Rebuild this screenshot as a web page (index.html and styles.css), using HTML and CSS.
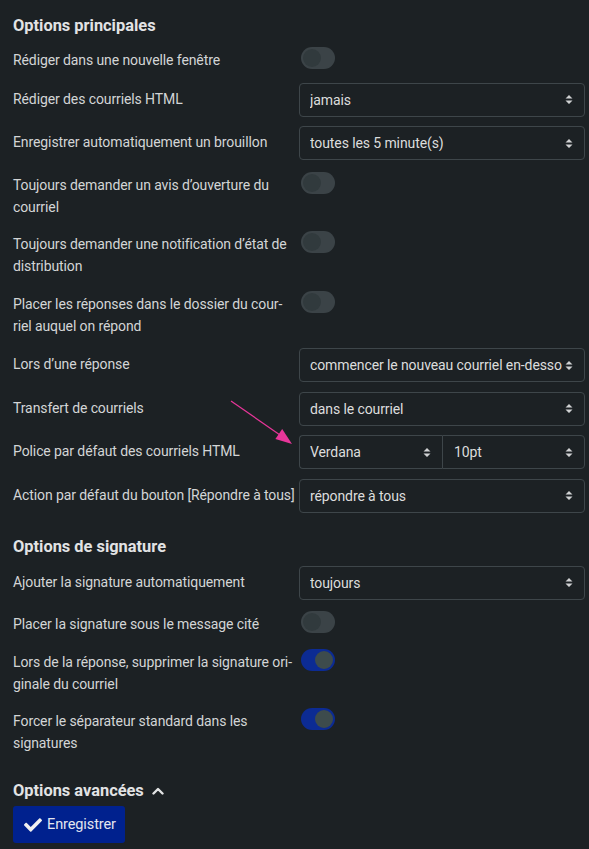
FILE: index.html
```html
<!DOCTYPE html>
<html lang="fr">
<head>
<meta charset="utf-8">
<title>Options</title>
<link rel="stylesheet" href="styles.css">
</head>
<body>
<div class="page">
  <h2 class="heading">Options principales</h2>

  <div class="row row-toggle">
    <div class="label">Rédiger dans une nouvelle fenêtre</div>
    <div class="control"><span class="toggle"></span></div>
  </div>
  <div class="row row-select">
    <div class="label">Rédiger des courriels HTML</div>
    <div class="control"><div class="select"><span class="val">jamais</span><svg class="caret" viewBox="0 0 8 11"><path d="M0.5 4.5 L4 1 L7.5 4.5 Z M0.5 6.5 L4 10 L7.5 6.5 Z"/></svg></div></div>
  </div>
  <div class="row row-select">
    <div class="label">Enregistrer automatiquement un brouillon</div>
    <div class="control"><div class="select"><span class="val">toutes les 5 minute(s)</span><svg class="caret" viewBox="0 0 8 11"><path d="M0.5 4.5 L4 1 L7.5 4.5 Z M0.5 6.5 L4 10 L7.5 6.5 Z"/></svg></div></div>
  </div>
  <div class="row row-toggle">
    <div class="label">Toujours demander un avis d’ouverture du courriel</div>
    <div class="control"><span class="toggle"></span></div>
  </div>
  <div class="row row-toggle">
    <div class="label">Toujours demander une notification d’état de distribution</div>
    <div class="control"><span class="toggle"></span></div>
  </div>
  <div class="row row-toggle">
    <div class="label">Placer les réponses dans le dossier du cour&shy;riel auquel on répond</div>
    <div class="control"><span class="toggle"></span></div>
  </div>
  <div class="row row-select">
    <div class="label">Lors d’une réponse</div>
    <div class="control"><div class="select"><span class="val">commencer le nouveau courriel en-dessous de la citation</span><svg class="caret" viewBox="0 0 8 11"><path d="M0.5 4.5 L4 1 L7.5 4.5 Z M0.5 6.5 L4 10 L7.5 6.5 Z"/></svg></div></div>
  </div>
  <div class="row row-select">
    <div class="label">Transfert de courriels</div>
    <div class="control"><div class="select"><span class="val">dans le courriel</span><svg class="caret" viewBox="0 0 8 11"><path d="M0.5 4.5 L4 1 L7.5 4.5 Z M0.5 6.5 L4 10 L7.5 6.5 Z"/></svg></div></div>
  </div>
  <div class="row row-select">
    <div class="label">Police par défaut des courriels HTML</div>
    <div class="control">
      <div class="select-group">
        <div class="select select-left"><span class="val">Verdana</span><svg class="caret" viewBox="0 0 8 11"><path d="M0.5 4.5 L4 1 L7.5 4.5 Z M0.5 6.5 L4 10 L7.5 6.5 Z"/></svg></div>
        <div class="select select-right"><span class="val">10pt</span><svg class="caret" viewBox="0 0 8 11"><path d="M0.5 4.5 L4 1 L7.5 4.5 Z M0.5 6.5 L4 10 L7.5 6.5 Z"/></svg></div>
      </div>
    </div>
    <svg class="arrow" viewBox="0 0 70 50"><line x1="1" y1="1" x2="50" y2="35" /><polygon points="62,44 45.4,39 52.2,29" /></svg>
  </div>
  <div class="row row-select">
    <div class="label nowrap">Action par défaut du bouton [Répondre à tous]</div>
    <div class="control"><div class="select"><span class="val">répondre à tous</span><svg class="caret" viewBox="0 0 8 11"><path d="M0.5 4.5 L4 1 L7.5 4.5 Z M0.5 6.5 L4 10 L7.5 6.5 Z"/></svg></div></div>
  </div>

  <h2 class="heading heading-section">Options de signature</h2>

  <div class="row row-select">
    <div class="label">Ajouter la signature automatiquement</div>
    <div class="control"><div class="select"><span class="val">toujours</span><svg class="caret" viewBox="0 0 8 11"><path d="M0.5 4.5 L4 1 L7.5 4.5 Z M0.5 6.5 L4 10 L7.5 6.5 Z"/></svg></div></div>
  </div>
  <div class="row row-toggle">
    <div class="label">Placer la signature sous le message cité</div>
    <div class="control"><span class="toggle"></span></div>
  </div>
  <div class="row row-toggle">
    <div class="label">Lors de la réponse, supprimer la signature ori&shy;ginale du courriel</div>
    <div class="control"><span class="toggle on"></span></div>
  </div>
  <div class="row row-toggle">
    <div class="label">Forcer le séparateur standard dans les signatures</div>
    <div class="control"><span class="toggle on"></span></div>
  </div>

  <h2 class="heading heading-section heading-adv">Options avancées <svg class="chev" viewBox="0 0 12 8"><path d="M1.5 6.5 L6 2 L10.5 6.5"/></svg></h2>

  <button class="btn"><svg class="check" viewBox="0 0 512 512"><path d="M173.898 439.404l-166.4-166.4c-9.997-9.997-9.997-26.206 0-36.204l36.203-36.204c9.997-9.998 26.207-9.998 36.204 0L192 312.69 432.095 72.596c9.997-9.997 26.207-9.997 36.204 0l36.203 36.204c9.997 9.997 9.997 26.206 0 36.204l-294.4 294.401c-9.998 9.997-26.207 9.997-36.204-.001z"/></svg>Enregistrer</button>
</div>
</body>
</html>
```

FILE: styles.css
```css
html, body {
  margin: 0;
  padding: 0;
  background: #1c2124;
}
body {
  font-family: Roboto, "Liberation Sans", Arial, sans-serif;
  color: #d3d5d6;
  font-size: 14px;
  letter-spacing: -0.1px;
}
.page {
  padding: 15px 4px 10px 13px;
  width: 589px;
  box-sizing: border-box;
}
.heading {
  margin: 0 0 8px 0;
  font-size: 16.4px;
  line-height: 22px;
  font-weight: 700;
  letter-spacing: 0;
  color: #e2e3e4;
  display: flex;
  align-items: center;
}
.heading-section {
  margin-top: 23px;
}
.heading-adv {
  margin-top: 24px;
  margin-bottom: 4px;
}
.chev {
  width: 12px;
  height: 8px;
  margin-left: 8px;
  fill: none;
  stroke: #e2e3e4;
  stroke-width: 2.4;
  stroke-linecap: round;
  stroke-linejoin: round;
}
.row {
  display: grid;
  grid-template-columns: 282px 286px;
  column-gap: 4px;
  align-items: start;
  margin-bottom: 9.5px;
  position: relative;
}
.label {
  line-height: 22px;
  hyphens: manual;
}
.nowrap {
  white-space: nowrap;
}
.row-select .label {
  padding-top: 5px;
}
.row-toggle {
  padding: 2px 0 2px;
}
.row-toggle .label {
  padding-top: 2px;
}
.control {
  display: flex;
}
.toggle {
  display: block;
  width: 34px;
  height: 22px;
  border-radius: 11px;
  background: #3b4347;
  margin-left: 2px;
  position: relative;
}
.toggle::after {
  content: "";
  position: absolute;
  top: 2px;
  left: 2px;
  width: 18px;
  height: 18px;
  border-radius: 50%;
  background: #313a3d;
}
.toggle.on {
  background: #0c2b93;
}
.toggle.on::after {
  left: 14px;
  background: #3d4b4c;
}
.select {
  flex: 1;
  height: 34px;
  box-sizing: border-box;
  border: 1px solid #3e464a;
  border-radius: 4px;
  display: flex;
  align-items: center;
  padding: 0 11px 0 10px;
  color: #dcdddd;
  font-size: 14px;
  min-width: 0;
}
.val {
  flex: 1;
  white-space: nowrap;
  overflow: hidden;
  min-width: 0;
  margin-right: 3px;
}
.caret {
  width: 8px;
  height: 11px;
  fill: #d0d2d3;
  flex: none;
}
.select-group {
  flex: 1;
  display: flex;
}
.select-left {
  flex: 0 0 143px;
  border-radius: 4px 0 0 4px;
  border-right-width: 0;
}
.select-right {
  border-radius: 0 4px 4px 0;
}
.select-right .val {
  padding-left: 1px;
}
.arrow {
  position: absolute;
  left: 217px;
  top: -35px;
  width: 70px;
  height: 50px;
  overflow: visible;
}
.arrow line {
  stroke: #e8369a;
  stroke-width: 1.2;
}
.arrow polygon {
  fill: #e8369a;
}
.btn {
  display: inline-flex;
  align-items: center;
  height: 37px;
  width: 112px;
  padding: 0 0 0 11px;
  border: none;
  border-radius: 3px;
  background: #00218e;
  color: #e4e6f0;
  font-family: Roboto, "Liberation Sans", Arial, sans-serif;
  font-size: 14.5px;
  letter-spacing: -0.1px;
  box-sizing: border-box;
}
.check {
  width: 18px;
  height: 18px;
  fill: #f0f0f0;
  margin-right: 5px;
}
```
